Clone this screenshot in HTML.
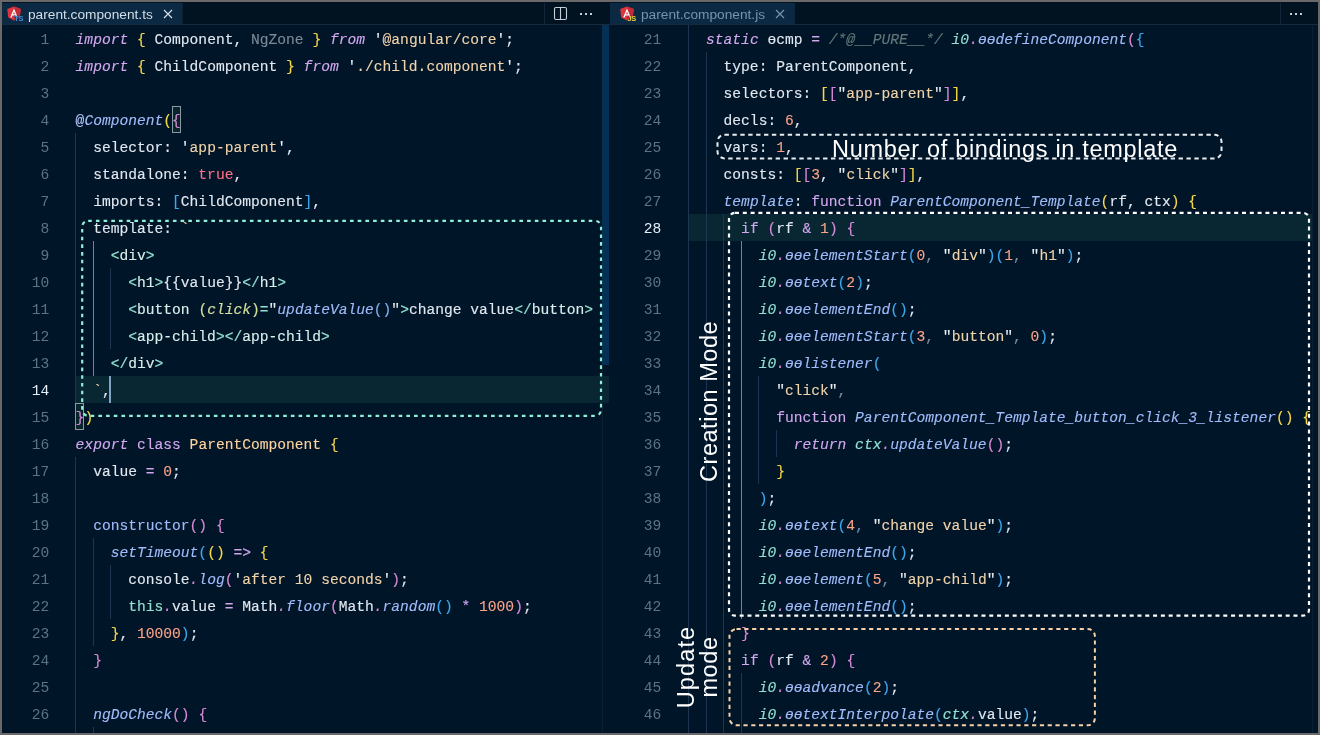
<!DOCTYPE html>
<html><head><meta charset="utf-8"><style>
html,body{margin:0;padding:0}
body{width:1320px;height:735px;overflow:hidden;position:relative;background:#6a6869;font-family:"Liberation Sans",sans-serif}
.frame{position:absolute;left:2px;top:2px;width:1316px;height:731px;background:#011529;overflow:hidden}
.abs{position:absolute}
.tabbar{position:absolute;top:2px;height:23px;background:#011320}
.tabbar .bb{position:absolute;left:0;right:0;bottom:0;height:1px;background:#17293a}
.tab{position:absolute;top:1px;height:21px;background:#0b2942}
.tabtxt{position:absolute;top:6.5px;font-size:13.7px;line-height:16px;white-space:pre}
.gn{position:absolute;width:60px;text-align:right;height:27px;line-height:27px;padding-top:2px;box-sizing:border-box;font-family:"Liberation Mono",monospace;font-size:14.6px;color:#5a7386}
.gn.act{color:#e6eef8}
.ln{position:absolute;height:27px;line-height:27px;white-space:pre;font-family:"Liberation Mono",monospace;color:#e2e8f0;padding-top:2px;box-sizing:border-box;-webkit-text-stroke:0.12px currentColor}
.ln i{font-style:normal}
.ln .k{color:#d2a8ee;font-style:italic}
.ln .kn{color:#d2a8ee}
.ln .s{color:#f1d3aa}
.ln .bt{color:#f1d3aa}
.ln .q{color:#e6eef0}
.ln .n{color:#f9a389}
.ln .b{color:#fb6f86}
.ln .f{color:#a1bcfa;font-style:italic}
.ln .fa{color:#b3c6fa}
.ln .fb{color:#7fb0f0}
.ln .fn{color:#a1bcfa}
.ln .t{color:#92e0d2}
.ln .ti{color:#92e0d2;font-style:italic}
.ln .c{color:#637777;font-style:italic}
.ln .cl{color:#ffd49f}
.ln .y{color:#f6d84a}
.ln .p{color:#d98ad6}
.ln .pm{color:#d98ad6}
.ln .pm2{color:#d98ad6}
.ln .bl{color:#3ea8ec}
.ln .tag{color:#d8f0ec}
.ln .at{color:#d4e09b;font-style:italic}
.ln .ap{color:#d4e09b}
.ln .gr{color:#7c8a96}
.ln .dot{color:#d98ad6;font-style:italic}
.ln .cm{color:#7390a6}
.guide{position:absolute;width:1px;background:#1d3550}
.guide.a{background:#6f8699}
.hl{position:absolute;height:27px;background:#092633}
.note{position:absolute;color:#fff;font-family:"Liberation Sans",sans-serif;font-size:23.5px;white-space:pre;line-height:24px}
#root{position:absolute;left:0;top:0;width:1320px;height:735px;will-change:transform}

.ln{font-size:14.617px}
</style></head><body><div id="root">
<div class="frame"></div>
<!-- left tab bar -->
<div class="tabbar" style="left:2px;width:607px"><div class="bb"></div></div>
<div class="tab" style="left:2px;top:3px;width:180px"></div>
<div class="abs" style="left:182px;top:3px;width:1px;height:21px;background:#0f2233"></div>
<svg class="abs" style="left:6px;top:6px" width="17" height="17" viewBox="0 0 17 17">
  <path d="M8 0.6 L14.8 3 L13.8 11.6 L8 14.6 L2.2 11.6 L1.2 3 Z" fill="#dd3540"/>
  <path d="M8 0.6 L14.8 3 L13.8 11.6 L8 14.6 Z" fill="#c42a35"/>
  <path d="M8 2.6 L4.2 11.6 H5.6 L6.4 9.6 H9.6 L10.4 11.6 H11.8 Z M7 8.3 L8 5.8 L9 8.3 Z" fill="#fff"/>
  <text x="8.3" y="15.4" font-family="Liberation Sans" font-size="7.4" font-weight="bold" letter-spacing="-0.4" fill="#3f8fd8" stroke="#0b2942" stroke-width="0.6" paint-order="stroke">TS</text>
</svg>
<div class="tabtxt" style="left:28px;color:#d2dee7">parent.component.ts</div>
<svg class="abs" style="left:163px;top:9px" width="10" height="10" viewBox="0 0 10 10"><path d="M1 1 L9 9 M9 1 L1 9" stroke="#d2dee7" stroke-width="1.2"/></svg>
<div class="abs" style="left:544px;top:3px;width:1px;height:21px;background:#11263a"></div>
<svg class="abs" style="left:553px;top:6px" width="15" height="15" viewBox="0 0 15 15"><rect x="1.5" y="1.5" width="12" height="12" rx="1.5" fill="none" stroke="#c5cfd9" stroke-width="1.1"/><path d="M7.5 1.5 V13.5" stroke="#c5cfd9" stroke-width="1.1"/></svg>
<div class="abs" style="left:580px;top:13px;width:2px;height:2px;background:#c5cfd9"></div>
<div class="abs" style="left:585px;top:13px;width:2px;height:2px;background:#c5cfd9"></div>
<div class="abs" style="left:590px;top:13px;width:2px;height:2px;background:#c5cfd9"></div>

<!-- right tab bar -->
<div class="tabbar" style="left:609px;width:709px"><div class="bb"></div></div>
<div class="tab" style="left:610px;top:3px;width:185px"></div>
<svg class="abs" style="left:619px;top:6px" width="17" height="17" viewBox="0 0 17 17">
  <path d="M8 0.6 L14.8 3 L13.8 11.6 L8 14.6 L2.2 11.6 L1.2 3 Z" fill="#dd3540"/>
  <path d="M8 0.6 L14.8 3 L13.8 11.6 L8 14.6 Z" fill="#c42a35"/>
  <path d="M8 2.6 L4.2 11.6 H5.6 L6.4 9.6 H9.6 L10.4 11.6 H11.8 Z M7 8.3 L8 5.8 L9 8.3 Z" fill="#fff"/>
  <text x="8.6" y="15.4" font-family="Liberation Sans" font-size="7.4" font-weight="bold" letter-spacing="-0.4" fill="#f0d040" stroke="#0b2942" stroke-width="0.6" paint-order="stroke">JS</text>
</svg>
<div class="tabtxt" style="left:641px;color:#7893ab">parent.component.js</div>
<svg class="abs" style="left:775px;top:9px" width="10" height="10" viewBox="0 0 10 10"><path d="M1 1 L9 9 M9 1 L1 9" stroke="#7893ab" stroke-width="1.2"/></svg>
<div class="abs" style="left:1280px;top:3px;width:1px;height:21px;background:#11263a"></div>
<div class="abs" style="left:1290px;top:13px;width:2px;height:2px;background:#c5cfd9"></div>
<div class="abs" style="left:1295px;top:13px;width:2px;height:2px;background:#c5cfd9"></div>
<div class="abs" style="left:1300px;top:13px;width:2px;height:2px;background:#c5cfd9"></div>

<!-- scrollbar left -->
<div class="abs" style="left:602px;top:25px;width:1px;height:708px;background:#0b1f2e"></div>
<div class="abs" style="left:602px;top:25px;width:7px;height:340px;background:#053055"></div>
<!-- right edge ruler -->
<div class="abs" style="left:1312px;top:25px;width:1px;height:708px;background:#0b1f2e"></div>

<div class="hl" style="left:75px;top:376px;width:534px"></div>
<div class="hl" style="left:688px;top:214px;width:624px"></div>
<div class="guide" style="left:75px;top:133px;height:270px"></div>
<div class="guide" style="left:75px;top:457px;height:276px"></div>
<div class="guide a" style="left:93px;top:241px;height:135px"></div>
<div class="guide" style="left:110px;top:268px;height:81px"></div>
<div class="guide" style="left:93px;top:538px;height:108px"></div>
<div class="guide" style="left:110px;top:565px;height:54px"></div>
<div class="guide" style="left:93px;top:727px;height:6px"></div>
<div class="guide" style="left:688px;top:25px;height:708px"></div>
<div class="guide" style="left:706px;top:52px;height:681px"></div>
<div class="guide" style="left:723px;top:214px;height:519px"></div>
<div class="guide a" style="left:741px;top:241px;height:378px"></div>
<div class="guide" style="left:741px;top:673px;height:60px"></div>
<div class="guide" style="left:758px;top:376px;height:108px"></div>
<div class="guide" style="left:776px;top:430px;height:27px"></div>
<div class="abs" style="left:172px;top:106px;width:7px;height:25px;border:1px solid #8a98a3;background:#08252c"></div>
<div class="abs" style="left:75px;top:403px;width:7px;height:25px;border:1px solid #8a98a3;background:#08252c"></div>
<div class="gn" style="top:25px;left:-10.7px">1</div>
<div class="gn" style="top:52px;left:-10.7px">2</div>
<div class="gn" style="top:79px;left:-10.7px">3</div>
<div class="gn" style="top:106px;left:-10.7px">4</div>
<div class="gn" style="top:133px;left:-10.7px">5</div>
<div class="gn" style="top:160px;left:-10.7px">6</div>
<div class="gn" style="top:187px;left:-10.7px">7</div>
<div class="gn" style="top:214px;left:-10.7px">8</div>
<div class="gn" style="top:241px;left:-10.7px">9</div>
<div class="gn" style="top:268px;left:-10.7px">10</div>
<div class="gn" style="top:295px;left:-10.7px">11</div>
<div class="gn" style="top:322px;left:-10.7px">12</div>
<div class="gn" style="top:349px;left:-10.7px">13</div>
<div class="gn act" style="top:376px;left:-10.7px">14</div>
<div class="gn" style="top:403px;left:-10.7px">15</div>
<div class="gn" style="top:430px;left:-10.7px">16</div>
<div class="gn" style="top:457px;left:-10.7px">17</div>
<div class="gn" style="top:484px;left:-10.7px">18</div>
<div class="gn" style="top:511px;left:-10.7px">19</div>
<div class="gn" style="top:538px;left:-10.7px">20</div>
<div class="gn" style="top:565px;left:-10.7px">21</div>
<div class="gn" style="top:592px;left:-10.7px">22</div>
<div class="gn" style="top:619px;left:-10.7px">23</div>
<div class="gn" style="top:646px;left:-10.7px">24</div>
<div class="gn" style="top:673px;left:-10.7px">25</div>
<div class="gn" style="top:700px;left:-10.7px">26</div>
<div class="gn" style="top:25px;left:601.3px">21</div>
<div class="gn" style="top:52px;left:601.3px">22</div>
<div class="gn" style="top:79px;left:601.3px">23</div>
<div class="gn" style="top:106px;left:601.3px">24</div>
<div class="gn" style="top:133px;left:601.3px">25</div>
<div class="gn" style="top:160px;left:601.3px">26</div>
<div class="gn" style="top:187px;left:601.3px">27</div>
<div class="gn act" style="top:214px;left:601.3px">28</div>
<div class="gn" style="top:241px;left:601.3px">29</div>
<div class="gn" style="top:268px;left:601.3px">30</div>
<div class="gn" style="top:295px;left:601.3px">31</div>
<div class="gn" style="top:322px;left:601.3px">32</div>
<div class="gn" style="top:349px;left:601.3px">33</div>
<div class="gn" style="top:376px;left:601.3px">34</div>
<div class="gn" style="top:403px;left:601.3px">35</div>
<div class="gn" style="top:430px;left:601.3px">36</div>
<div class="gn" style="top:457px;left:601.3px">37</div>
<div class="gn" style="top:484px;left:601.3px">38</div>
<div class="gn" style="top:511px;left:601.3px">39</div>
<div class="gn" style="top:538px;left:601.3px">40</div>
<div class="gn" style="top:565px;left:601.3px">41</div>
<div class="gn" style="top:592px;left:601.3px">42</div>
<div class="gn" style="top:619px;left:601.3px">43</div>
<div class="gn" style="top:646px;left:601.3px">44</div>
<div class="gn" style="top:673px;left:601.3px">45</div>
<div class="gn" style="top:700px;left:601.3px">46</div>
<div class="ln L" style="top:25px;left:75.60px"><i class="k">import</i> <i class="y">{</i> Component, <i class="gr">NgZone</i> <i class="y">}</i> <i class="k">from</i> <i class="q">&#x27;</i><i class="s">@angular/core</i><i class="q">&#x27;</i>;</div>
<div class="ln L" style="top:52px;left:75.60px"><i class="k">import</i> <i class="y">{</i> ChildComponent <i class="y">}</i> <i class="k">from</i> <i class="q">&#x27;</i><i class="s">./child.component</i><i class="q">&#x27;</i>;</div>
<div class="ln L" style="top:79px;left:75.60px"></div>
<div class="ln L" style="top:106px;left:75.60px"><i class="fa">@</i><i class="f">Component</i><i class="y">(</i><i class="pm">{</i></div>
<div class="ln L" style="top:133px;left:75.60px">  selector: <i class="q">&#x27;</i><i class="s">app-parent</i><i class="q">&#x27;</i>,</div>
<div class="ln L" style="top:160px;left:75.60px">  standalone: <i class="b">true</i>,</div>
<div class="ln L" style="top:187px;left:75.60px">  imports: <i class="bl">[</i>ChildComponent<i class="bl">]</i>,</div>
<div class="ln L" style="top:214px;left:75.60px">  template: <i class="bt">`</i></div>
<div class="ln L" style="top:241px;left:75.60px">    <i class="t">&lt;</i><i class="tag">div</i><i class="t">&gt;</i></div>
<div class="ln L" style="top:268px;left:75.60px">      <i class="t">&lt;</i><i class="tag">h1</i><i class="t">&gt;</i>{{value}}<i class="t">&lt;/</i><i class="tag">h1</i><i class="t">&gt;</i></div>
<div class="ln L" style="top:295px;left:75.60px">      <i class="t">&lt;</i><i class="tag">button</i> <i class="ap">(</i><i class="at">click</i><i class="ap">)</i><i class="t">=</i><i class="q">&quot;</i><i class="f">updateValue</i><i class="fb">()</i><i class="q">&quot;</i><i class="t">&gt;</i>change value<i class="t">&lt;/</i><i class="tag">button</i><i class="t">&gt;</i></div>
<div class="ln L" style="top:322px;left:75.60px">      <i class="t">&lt;</i><i class="tag">app-child</i><i class="t">&gt;&lt;/</i><i class="tag">app-child</i><i class="t">&gt;</i></div>
<div class="ln L" style="top:349px;left:75.60px">    <i class="t">&lt;/</i><i class="tag">div</i><i class="t">&gt;</i></div>
<div class="ln L" style="top:376px;left:75.60px">  <i class="bt">`</i>,</div>
<div class="ln L" style="top:403px;left:75.60px"><i class="pm2">}</i><i class="y">)</i></div>
<div class="ln L" style="top:430px;left:75.60px"><i class="k">export</i> <i class="kn">class</i> <i class="cl">ParentComponent</i> <i class="y">{</i></div>
<div class="ln L" style="top:457px;left:75.60px">  value <i class="kn">=</i> <i class="n">0</i>;</div>
<div class="ln L" style="top:484px;left:75.60px"></div>
<div class="ln L" style="top:511px;left:75.60px">  <i class="fn">constructor</i><i class="p">()</i> <i class="p">{</i></div>
<div class="ln L" style="top:538px;left:75.60px">    <i class="f">setTimeout</i><i class="bl">(</i><i class="y">()</i> <i class="kn">=&gt;</i> <i class="y">{</i></div>
<div class="ln L" style="top:565px;left:75.60px">      console<i class="dot">.</i><i class="f">log</i><i class="p">(</i><i class="q">&#x27;</i><i class="s">after 10 seconds</i><i class="q">&#x27;</i><i class="p">)</i>;</div>
<div class="ln L" style="top:592px;left:75.60px">      <i class="t">this</i><i class="dot">.</i>value <i class="kn">=</i> Math<i class="dot">.</i><i class="f">floor</i><i class="p">(</i>Math<i class="dot">.</i><i class="f">random</i><i class="bl">()</i> <i class="kn">*</i> <i class="n">1000</i><i class="p">)</i>;</div>
<div class="ln L" style="top:619px;left:75.60px">    <i class="y">}</i>, <i class="n">10000</i><i class="bl">)</i>;</div>
<div class="ln L" style="top:646px;left:75.60px">  <i class="p">}</i></div>
<div class="ln L" style="top:673px;left:75.60px"></div>
<div class="ln L" style="top:700px;left:75.60px">  <i class="f">ngDoCheck</i><i class="p">()</i> <i class="p">{</i></div>
<div class="ln R" style="top:25px;left:688.50px">  <i class="k">static</i> ɵcmp <i class="kn">=</i> <i class="c">/*@__PURE__*/</i> <i class="ti">i0</i><i class="dot">.</i><i class="f">ɵɵdefineComponent</i><i class="p">(</i><i class="bl">{</i></div>
<div class="ln R" style="top:52px;left:688.50px">    type: ParentComponent,</div>
<div class="ln R" style="top:79px;left:688.50px">    selectors: <i class="y">[</i><i class="p">[</i><i class="q">&quot;</i><i class="s">app-parent</i><i class="q">&quot;</i><i class="p">]</i><i class="y">]</i>,</div>
<div class="ln R" style="top:106px;left:688.50px">    decls: <i class="n">6</i>,</div>
<div class="ln R" style="top:133px;left:688.50px">    vars: <i class="n">1</i>,</div>
<div class="ln R" style="top:160px;left:688.50px">    consts: <i class="y">[</i><i class="p">[</i><i class="n">3</i>, <i class="q">&quot;</i><i class="s">click</i><i class="q">&quot;</i><i class="p">]</i><i class="y">]</i>,</div>
<div class="ln R" style="top:187px;left:688.50px">    <i class="f">template</i>: <i class="kn">function</i> <i class="f">ParentComponent_Template</i><i class="y">(</i>rf, ctx<i class="y">)</i> <i class="y">{</i></div>
<div class="ln R" style="top:214px;left:688.50px">      <i class="kn">if</i> <i class="p">(</i>rf <i class="kn">&amp;</i> <i class="n">1</i><i class="p">)</i> <i class="p">{</i></div>
<div class="ln R" style="top:241px;left:688.50px">        <i class="ti">i0</i><i class="dot">.</i><i class="f">ɵɵelementStart</i><i class="bl">(</i><i class="n">0</i><i class="cm">,</i> <i class="q">&quot;</i><i class="s">div</i><i class="q">&quot;</i><i class="bl">)(</i><i class="n">1</i><i class="cm">,</i> <i class="q">&quot;</i><i class="s">h1</i><i class="q">&quot;</i><i class="bl">)</i>;</div>
<div class="ln R" style="top:268px;left:688.50px">        <i class="ti">i0</i><i class="dot">.</i><i class="f">ɵɵtext</i><i class="bl">(</i><i class="n">2</i><i class="bl">)</i>;</div>
<div class="ln R" style="top:295px;left:688.50px">        <i class="ti">i0</i><i class="dot">.</i><i class="f">ɵɵelementEnd</i><i class="bl">()</i>;</div>
<div class="ln R" style="top:322px;left:688.50px">        <i class="ti">i0</i><i class="dot">.</i><i class="f">ɵɵelementStart</i><i class="bl">(</i><i class="n">3</i><i class="cm">,</i> <i class="q">&quot;</i><i class="s">button</i><i class="q">&quot;</i><i class="cm">,</i> <i class="n">0</i><i class="bl">)</i>;</div>
<div class="ln R" style="top:349px;left:688.50px">        <i class="ti">i0</i><i class="dot">.</i><i class="f">ɵɵlistener</i><i class="bl">(</i></div>
<div class="ln R" style="top:376px;left:688.50px">          <i class="q">&quot;</i><i class="s">click</i><i class="q">&quot;</i><i class="cm">,</i></div>
<div class="ln R" style="top:403px;left:688.50px">          <i class="kn">function</i> <i class="f">ParentComponent_Template_button_click_3_listener</i><i class="y">()</i> <i class="y">{</i></div>
<div class="ln R" style="top:430px;left:688.50px">            <i class="k">return</i> <i class="ti">ctx</i><i class="dot">.</i><i class="f">updateValue</i><i class="p">()</i>;</div>
<div class="ln R" style="top:457px;left:688.50px">          <i class="y">}</i></div>
<div class="ln R" style="top:484px;left:688.50px">        <i class="bl">)</i>;</div>
<div class="ln R" style="top:511px;left:688.50px">        <i class="ti">i0</i><i class="dot">.</i><i class="f">ɵɵtext</i><i class="bl">(</i><i class="n">4</i><i class="cm">,</i> <i class="q">&quot;</i><i class="s">change value</i><i class="q">&quot;</i><i class="bl">)</i>;</div>
<div class="ln R" style="top:538px;left:688.50px">        <i class="ti">i0</i><i class="dot">.</i><i class="f">ɵɵelementEnd</i><i class="bl">()</i>;</div>
<div class="ln R" style="top:565px;left:688.50px">        <i class="ti">i0</i><i class="dot">.</i><i class="f">ɵɵelement</i><i class="bl">(</i><i class="n">5</i><i class="cm">,</i> <i class="q">&quot;</i><i class="s">app-child</i><i class="q">&quot;</i><i class="bl">)</i>;</div>
<div class="ln R" style="top:592px;left:688.50px">        <i class="ti">i0</i><i class="dot">.</i><i class="f">ɵɵelementEnd</i><i class="bl">()</i>;</div>
<div class="ln R" style="top:619px;left:688.50px">      <i class="p">}</i></div>
<div class="ln R" style="top:646px;left:688.50px">      <i class="kn">if</i> <i class="p">(</i>rf <i class="kn">&amp;</i> <i class="n">2</i><i class="p">)</i> <i class="p">{</i></div>
<div class="ln R" style="top:673px;left:688.50px">        <i class="ti">i0</i><i class="dot">.</i><i class="f">ɵɵadvance</i><i class="bl">(</i><i class="n">2</i><i class="bl">)</i>;</div>
<div class="ln R" style="top:700px;left:688.50px">        <i class="ti">i0</i><i class="dot">.</i><i class="f">ɵɵtextInterpolate</i><i class="bl">(</i><i class="ti">ctx</i><i class="dot">.</i>value<i class="bl">)</i>;</div>
<div class="abs" style="left:109px;top:376px;width:2px;height:27px;background:#80a4c2"></div>
<svg class="abs" style="left:0;top:0" width="1320" height="735">
<rect x="82.2" y="220.8" width="518.8" height="195" rx="6" fill="none" stroke="#8ef0d8" stroke-width="2.2" stroke-dasharray="3.6 4.1"/>
<rect x="717.5" y="134.8" width="504" height="23.6" rx="7" fill="none" stroke="#e8ecef" stroke-width="2" stroke-dasharray="4.4 3.5"/>
<rect x="729" y="212.8" width="580" height="402.9" rx="6" fill="none" stroke="#ffffff" stroke-width="2.2" stroke-dasharray="4 3.8"/>
<rect x="729.5" y="629.1" width="365.4" height="96.1" rx="7" fill="none" stroke="#f7cfa6" stroke-width="2" stroke-dasharray="4.2 3.6"/>
</svg>
<div class="note" style="left:832px;top:136.5px;letter-spacing:0.69px">Number of bindings in template</div>
<div class="note" style="left:697px;top:482px;transform-origin:0 0;transform:rotate(-90deg);letter-spacing:0.54px">Creation Mode</div>
<div class="note" style="left:675px;top:717.4px;transform-origin:0 0;transform:rotate(-90deg);letter-spacing:1.15px;text-align:center;width:100px;line-height:23.2px">Update</div>
<div class="note" style="left:697.6px;top:717.1px;transform-origin:0 0;transform:rotate(-90deg);letter-spacing:0.6px;text-align:center;width:100px;line-height:23.2px">mode</div>
</div></body></html>
